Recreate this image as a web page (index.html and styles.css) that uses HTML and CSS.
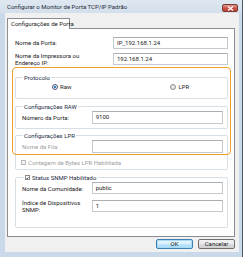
FILE: index.html
```html
<!DOCTYPE html>
<html lang="pt">
<head>
<meta charset="utf-8">
<title>Configurar o Monitor de Porta TCP/IP Padrão</title>
<link rel="stylesheet" href="styles.css">
</head>
<body>
<div class="window">
  <div class="titlebar">
    <span class="title">Configurar o Monitor de Porta TCP/IP Padrão</span>
    <span class="close"><svg width="7" height="5" viewBox="0 0 7 5"><path d="M1 0.6 L6 4.4 M6 0.6 L1 4.4" stroke="#fff" stroke-width="1.3"/></svg></span>
  </div>
  <div class="client">
    <div class="tabs"><div class="tab">Configurações de Porta</div></div>
    <div class="panel">
      <div class="row first">
        <span class="lbl">Nome da Porta:</span>
        <span class="input wide">IP_192.168.1.24</span>
      </div>
      <div class="row">
        <span class="lbl two">Nome da Impressora ou<br>Endereço IP:</span>
        <span class="input wide">192.168.1.24</span>
      </div>
      <fieldset class="group proto">
        <legend>Protocolo</legend>
        <div class="radios">
          <span class="radio-item"><span class="radio on"></span>Raw</span>
          <span class="radio-item lpr"><span class="radio"></span>LPR</span>
        </div>
      </fieldset>
      <fieldset class="group raw">
        <legend>Configurações RAW</legend>
        <div class="grow">
          <span class="lbl">Número da Porta:</span>
          <span class="input">9100</span>
        </div>
      </fieldset>
      <fieldset class="group lprg">
        <legend>Configurações LPR</legend>
        <div class="grow">
          <span class="lbl disabled">Nome da Fila:</span>
          <span class="input"></span>
        </div>
        <div class="check disabled"><span class="box"></span>Contagem de Bytes LPR Habilitada</div>
      </fieldset>
      <fieldset class="group snmp">
        <legend><span class="check"><span class="box checked"><svg width="4" height="4" viewBox="0 0 4 4"><path d="M0.5 2.2 L1.5 3.3 L3.5 0.6" fill="none" stroke="#2a3a5a" stroke-width="0.9"/></svg></span>Status SNMP Habilitado</span></legend>
        <div class="grow">
          <span class="lbl">Nome da Comunidade:</span>
          <span class="input">public</span>
        </div>
        <div class="grow tall">
          <span class="lbl two">Índice de Dispositivos<br>SNMP:</span>
          <span class="input">1</span>
        </div>
      </fieldset>
      <div class="highlight"></div>
    </div>
    <div class="buttons">
      <span class="btn default">OK</span>
      <span class="btn">Cancelar</span>
    </div>
  </div>
</div>
</body>
</html>
```

FILE: styles.css
```css
* { box-sizing: border-box; }
html, body { margin: 0; padding: 0; }
body {
  width: 243px;
  height: 257px;
  font-family: Roboto, "Liberation Sans", sans-serif;
  font-size: 6px;
  color: #1a1a1a;
  overflow: hidden;
  white-space: nowrap;
}
.window {
  width: 243px;
  height: 257px;
  background: #c9d9ea;
  border-right: 1px solid #4a5a6a;
  display: flex;
  flex-direction: column;
}
.titlebar {
  height: 13px;
  flex: none;
  display: flex;
  align-items: center;
  background: linear-gradient(#dfe8f1, #d3dfeb);
  padding: 1px 4px 0 7px;
}
.title { flex: 1; color: #1e2a38; line-height: 7.2px; }
.close {
  width: 16px;
  height: 8px;
  margin-top: 2px;
  border-radius: 2px;
  background: linear-gradient(#e0a095, #c9554a 50%, #c04030);
  border: 1px solid #7d3a32;
  display: flex;
  align-items: center;
  justify-content: center;
}
.client {
  flex: none;
  height: 239px;
  margin: 0 3px 0 5px;
  background: #f0f0f0;
  padding: 5px 4px 0 2px;
  display: flex;
  flex-direction: column;
}
.tabs { height: 10px; display: flex; }
.tab {
  width: 63px;
  height: 11px;
  background: #fff;
  border: 1px solid #898c95;
  border-bottom: none;
  padding: 1px 0 0 3px;
  line-height: 7.2px;
  position: relative;
  z-index: 1;
}
.panel {
  position: relative;
  height: 209px;
  background: #fff;
  border: 1px solid #898c95;
  padding: 8px 6px 0 7px;
  display: flex;
  flex-direction: column;
}
.row {
  display: flex;
  align-items: center;
  height: 12px;
  margin-bottom: 4px;
}
.lbl { line-height: 7.2px; }
.row .lbl { width: 97px; }
.input {
  height: 12px;
  border: 1px solid #c6cacf;
  border-top-color: #abadb3;
  background: #fff;
  padding-left: 3px;
  line-height: 10px;
  display: block;
}
.input.wide { width: 115px; margin-left: auto; }
.group {
  margin: 0;
  border: 1px solid #d5dfe5;
  border-radius: 2px;
  padding: 0 4px 0 5px;
  min-width: 0;
}
.group legend {
  padding: 0 1px;
  margin-left: 2px;
  line-height: 7.2px;
  color: #1a2a44;
}
.proto { margin-top: 5px; height: 25px; }
.radios { display: flex; padding-top: 2px; }
.radio-item { display: flex; align-items: center; line-height: 7.2px; margin-left: 31px; }
.radio-item.lpr { margin-left: 99px; }
.radio {
  width: 6px; height: 6px;
  border-radius: 50%;
  border: 1px solid #8e8f8f;
  background: radial-gradient(#f4f4f4, #d4d4d4);
  margin-right: 2px;
}
.radio.on { background: radial-gradient(#2a6ea5 0, #3a8dd0 1.3px, #e8eef4 1.5px); border-color: #557; }
.raw { margin-top: 4px; height: 26px; }
.lprg { margin-top: 3px; height: 38px; }
.snmp { margin-top: 4px; height: 54px; }
.grow { display: flex; align-items: center; margin-top: 1px; }
.grow .lbl { width: 71px; padding-left: 1px; }
.grow .input { width: 132px; height: 13px; }
.grow.tall { margin-top: 5px; }
.snmp .grow .input { height: 12px; }
.disabled { color: #a0a0a0; }
.check { display: flex; align-items: center; line-height: 7.2px; }
.lprg .check { margin-top: 6px; }
.box {
  width: 5px; height: 5px;
  border: 1px solid #b8b8b8;
  background: #f4f4f4;
  margin-right: 2px;
  display: flex;
  align-items: center;
  justify-content: center;
}
.box.checked { border-color: #8a8a8a; background: #fff; }
.snmp legend { padding: 0 2px 0 1px; margin-left: 3px; }
.highlight {
  position: absolute;
  left: 4px;
  top: 38px;
  width: 219px;
  height: 88px;
  border: 1.5px solid #f0a02a;
  border-radius: 4px;
  pointer-events: none;
}
.buttons {
  display: flex;
  justify-content: flex-end;
  gap: 5px;
  margin-top: 2px;
  padding-right: 0;
}
.btn {
  width: 37px;
  height: 10px;
  border: 1px solid #707070;
  border-radius: 2px;
  background: linear-gradient(#f2f2f2, #ebebeb 50%, #dddddd 50%, #cfcfcf);
  text-align: center;
  line-height: 8px;
}
.btn.default { border-color: #3c7fb1; background: linear-gradient(#eaf6fd, #d9f0fc 50%, #bee6fd 50%, #a7d9f5); box-shadow: inset 0 0 0 1px #a9dbf6; }
```
